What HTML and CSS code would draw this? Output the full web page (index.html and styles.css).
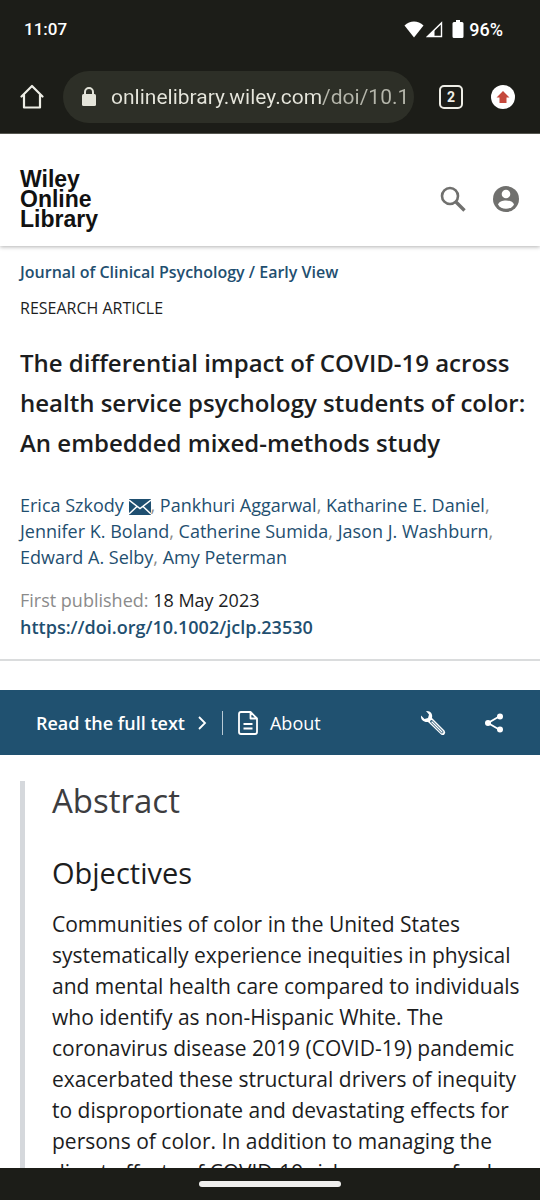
FILE: index.html
```html
<!DOCTYPE html>
<html lang="en">
<head>
  <meta charset="UTF-8">
  <meta name="viewport" content="width=device-width, initial-scale=1.0">
  <title>Wiley Online Library</title>
  <link rel="stylesheet" href="styles.css">
</head>
<body>

  <div class="status-bar">
    <span class="time">11:07</span>
    <div class="status-icons">
      <svg width="20" height="17" viewBox="0 0 20 17"><path d="M0.500 4.500C6-0.800 14-0.800 19.500 4.500L10 16.500Z" fill="#fff"/></svg>
      <svg width="17" height="17" viewBox="0 0 17 17"><path d="M1.500 15.500H15.500V2Z" fill="none" stroke="#fff" stroke-width="1.400"/><path d="M1.500 15.500H8.500V9Z" fill="#fff"/></svg>
      <svg class="battery" width="12" height="18" viewBox="0 0 12 18"><path d="M4 0h4v2h2q1.500 0 1.500 1.500v13q0 1.500-1.500 1.500H2q-1.500 0-1.500-1.500v-13Q.5 2 2 2h2z" fill="#fff"/></svg>
      <span>96%</span>
    </div>
  </div>

  <div class="browser-bar">
    <button class="icon-button" aria-label="Home">
      <svg width="24" height="26" viewBox="0 0 24 26" fill="none" stroke="#eeeee6" stroke-width="2.200" stroke-linejoin="round" stroke-linecap="round"><path d="M1.500 12.500L12 2L22.500 12.500M4 11V23.500H20V11"/></svg>
    </button>
    <div class="address">
      <svg width="16" height="20" viewBox="0 0 16 20"><rect x="1" y="7" width="14" height="12" rx="1.500" fill="#e4e4da"/><path d="M4 8V5a4 4 0 0 1 8 0v3" fill="none" stroke="#e4e4da" stroke-width="2"/></svg>
      <input type="text" aria-label="Address" value="onlinelibrary.wiley.com/doi/10.1">
    </div>
    <button class="tabs" aria-label="Open tabs">2</button>
    <button class="icon-button" aria-label="Update available">
      <svg width="24" height="24" viewBox="0 0 24 24"><circle cx="12" cy="12" r="12" fill="#fff"/><path d="M12 6l6.500 6.500h-3V18h-7v-5.500h-3z" fill="#c5483c"/></svg>
    </button>
  </div>

  <div class="page">
    <header class="site-header">
      <a class="logo" href="#">Wiley<br>Online<br>Library</a>
      <div class="header-icons">
        <button class="icon-button" aria-label="Search">
          <svg width="26" height="26" viewBox="0 0 26 26" fill="none" stroke="#70706e"><circle cx="10" cy="10" r="8" stroke-width="2.600"/><path d="M15.500 15.500L24.500 24.500" stroke-width="3.400"/></svg>
        </button>
        <button class="icon-button" aria-label="Account">
          <svg width="26" height="26" viewBox="0 0 26 26"><circle cx="13" cy="13" r="13" fill="#70706e"/><circle cx="13" cy="8" r="4.300" fill="#fff"/><path d="M5 18.500c1.500-5.500 14.500-5.500 16 0c-2.500 5.700-13.500 5.700-16 0z" fill="#fff"/></svg>
        </button>
      </div>
    </header>

    <section class="citation">
      <nav class="breadcrumb"><a href="#">Journal of Clinical Psychology</a> / <a href="#">Early View</a></nav>
      <p class="category">RESEARCH ARTICLE</p>
      <h1>The differential impact of COVID-19 across health service psychology students of color: An embedded mixed-methods study</h1>
      <p class="authors">
        <a href="#">Erica Szkody <svg class="mail" width="22" height="16" viewBox="0 0 22 16"><path d="M0 0h22v16H0z" fill="#1f4f70"/><path d="M0 1l11 8.500L22 1M0 15l8-7.500M22 15l-8-7.500" fill="none" stroke="#fff" stroke-width="1.500"/></svg></a>, <a href="#">Pankhuri Aggarwal</a>, <a href="#">Katharine E. Daniel</a>, <a href="#">Jennifer K. Boland</a>, <a href="#">Catherine Sumida</a>, <a href="#">Jason J. Washburn</a>, <a href="#">Edward A. Selby</a>, <a href="#">Amy Peterman</a>
      </p>
      <p class="published">First published: <span>18 May 2023</span></p>
      <a class="doi" href="#">https://doi.org/10.1002/jclp.23530</a>
    </section>

    <nav class="toolbar">
      <a class="full-text" href="#">Read the full text
        <svg width="10" height="14" viewBox="0 0 10 14"><path d="M2 1l6 6-6 6" fill="none" stroke="#fff" stroke-width="1.800"/></svg>
      </a>
      <a class="about" href="#">
        <svg width="20" height="24" viewBox="0 0 20 24" fill="none" stroke="#fff" stroke-width="1.800" stroke-linejoin="round"><path d="M12.500 1H3Q1 1 1 3v18q0 2 2 2h14q2 0 2-2V7.500zM12.500 1v6.500H19M5.500 13h9M5.500 17.500h9"/></svg>
        About
      </a>
      <div class="tools">
        <button class="icon-button" aria-label="Tools">
          <svg width="26" height="26" viewBox="0 0 26 26"><path d="M6 1C10.500 .5 13 4 12 8L24.500 20.500q1.500 2 0 3.700t-3.700 0L8 12C4 12.500 .5 10 1 5.500L4.500 9 8 8l1-3.500z" fill="#fff"/><path d="M11.500 11.500L22 22" stroke="#205170" stroke-width="2.800" stroke-linecap="round"/><path d="M12 12l10 10" stroke="#fff" stroke-width="1.200" stroke-linecap="round"/></svg>
        </button>
        <button class="icon-button" aria-label="Share">
          <svg width="20" height="20" viewBox="0 0 20 20" fill="#fff"><path d="M16 3L4 10l12 7" fill="none" stroke="#fff" stroke-width="1.800"/><circle cx="16" cy="3.500" r="3"/><circle cx="4" cy="10" r="3"/><circle cx="16" cy="16.500" r="3"/></svg>
        </button>
      </div>
    </nav>

    <article class="abstract">
      <h2>Abstract</h2>
      <h3>Objectives</h3>
      <p>Communities of color in the United States systematically experience inequities in physical and mental health care compared to individuals who identify as non-Hispanic White. The coronavirus disease 2019 (COVID-19) pandemic exacerbated these structural drivers of inequity to disproportionate and devastating effects for persons of color. In addition to managing the direct effects of COVID-19 risk, persons of color</p>
    </article>
  </div>

  <div class="gesture-bar"><span></span></div>

</body>
</html>
```
FILE: styles.css
```css
* {
  box-sizing: border-box;
}

body {
  margin: 0;
  height: 100vh;
  display: flex;
  flex-direction: column;
  overflow: hidden;
  background: #fff;
  color: #1c1d1e;
  font-family: "Open Sans", sans-serif;
}

h1, h2, h3, p {
  margin: 0;
}

a {
  color: #1f4f70;
  text-decoration: none;
}

svg {
  display: block;
  flex: none;
}

button {
  padding: 0;
  border: 0;
  background: none;
  font: inherit;
}

/* phone chrome */
.status-bar {
  flex: none;
  height: 60px;
  padding: 0 37px 2px 24px;
  display: flex;
  align-items: center;
  justify-content: space-between;
  background: #1c1d18;
  color: #fff;
  font: 500 18px "Roboto", sans-serif;
}

.time {
  font-size: 17px;
}

.status-icons {
  display: flex;
  align-items: center;
  gap: 2px;
}

.battery {
  margin: 0 3px 0 7px;
}

.browser-bar {
  flex: none;
  height: 74px;
  padding: 0 25px 0 20px;
  display: flex;
  align-items: center;
  background: #1c1d18;
  border-bottom: 1px solid #55564f;
}

.address {
  flex: 1;
  min-width: 0;
  height: 52px;
  margin: 0 25px 0 19px;
  padding: 0 4px 0 18px;
  display: flex;
  align-items: center;
  gap: 14px;
  border-radius: 26px;
  background: #2d2f27;
}

.address input {
  flex: 1;
  min-width: 0;
  padding: 0;
  border: 0;
  background: linear-gradient(90deg, #e6e6dc 211px, #b5b6ab 211px);
  background-clip: text;
  color: transparent;
  font: 21px "Roboto", sans-serif;
}

.tabs {
  width: 24px;
  height: 24px;
  margin-right: 28px;
  border: 2px solid #eeeee6;
  border-radius: 5px;
  color: #eeeee6;
  font: bold 14px "Roboto", sans-serif;
}

.page {
  flex: 1;
  min-height: 0;
  overflow: hidden;
}

/* site header */
.site-header {
  height: 112px;
  padding: 18px 21px 0 20px;
  display: flex;
  align-items: center;
  justify-content: space-between;
  box-shadow: 0 1px 4px rgba(0, 0, 0, 0.3);
}

.logo {
  color: #111;
  font: bold 23px/20px "Liberation Sans", Arial, sans-serif;
}

.header-icons {
  display: flex;
  gap: 27px;
}

/* article info */
.citation {
  padding: 14px 12px 18px 20px;
  border-bottom: 2px solid #dadcdd;
}

.breadcrumb {
  color: #1f4f70;
  font-size: 16px;
  font-weight: 600;
  line-height: 24px;
}

.category {
  margin-top: 12px;
  font-size: 16px;
  line-height: 24px;
}

h1 {
  margin-top: 23px;
  font-size: 24px;
  font-weight: 600;
  line-height: 40px;
}

.authors {
  margin-top: 29px;
  color: #8b8b8b;
  font-size: 18px;
  line-height: 26px;
}

.mail {
  display: inline-block;
  vertical-align: -3px;
}

.published {
  margin-top: 17px;
  color: #8b8b8b;
  font-size: 18px;
  line-height: 27px;
}

.published span {
  color: #1c1d1e;
}

.doi {
  display: block;
  font-size: 18px;
  font-weight: 600;
  line-height: 27px;
}

.toolbar {
  height: 65px;
  margin-top: 29px;
  padding: 0 36px;
  display: flex;
  align-items: center;
  background: #205170;
  font-size: 18px;
}

.toolbar a {
  display: flex;
  align-items: center;
  gap: 12px;
  color: #fff;
}

.full-text {
  padding-right: 15px;
  border-right: 1px solid #b9cad5;
  font-weight: 600;
}

.about {
  padding-left: 15px;
}

.tools {
  margin-left: auto;
  display: flex;
  align-items: center;
  gap: 38px;
}

.abstract {
  margin: 26px 20px 0;
  padding-left: 27px;
  border-left: 5px solid #d5d8dc;
}

h2 {
  color: #3d3d3f;
  font-size: 33px;
  font-weight: 400;
  line-height: 40px;
}

h3 {
  margin-top: 32px;
  font-size: 29px;
  font-weight: 400;
  line-height: 40px;
}

.abstract p {
  margin: 16px -8px 0 0;
  font-size: 21px;
  line-height: 31px;
}

.gesture-bar {
  flex: none;
  height: 32px;
  display: flex;
  align-items: center;
  justify-content: center;
  background: #1c1d18;
}

.gesture-bar span {
  width: 142px;
  height: 6px;
  border-radius: 3px;
  background: #f0f0ee;
}
```
